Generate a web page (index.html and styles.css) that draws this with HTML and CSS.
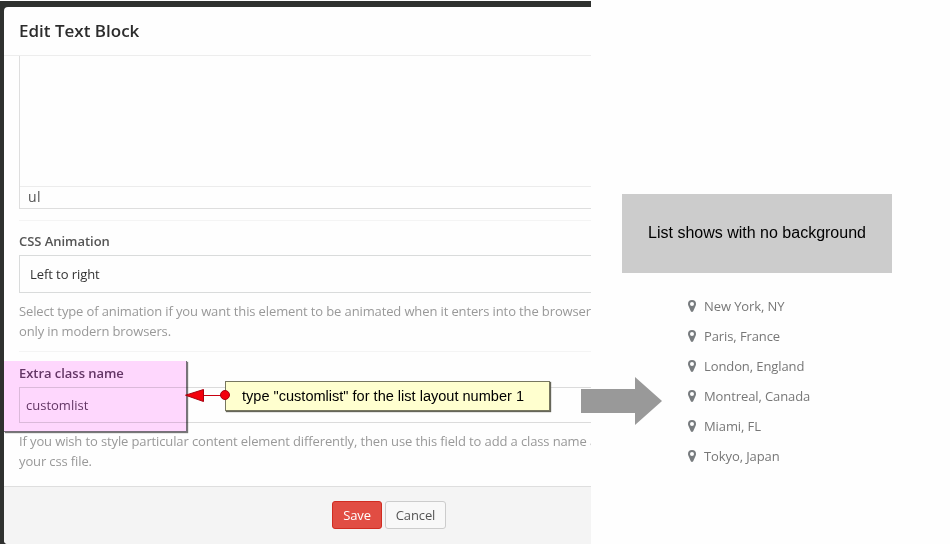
FILE: index.html
```html
<!DOCTYPE html>
<html lang="en">
<head>
<meta charset="utf-8">
<title>Edit Text Block</title>
<link rel="stylesheet" href="styles.css">
</head>
<body>
<main class="page">
  <section class="backdrop">
    <div class="modal">
      <header class="modal-header"><h1>Edit Text Block</h1></header>
      <div class="modal-body">
        <div class="editor">
          <div class="editor-area"></div>
          <div class="editor-path">ul</div>
        </div>
        <div class="field">
          <label class="label">CSS Animation</label>
          <div class="select">Left to right</div>
          <p class="help">Select type of animation if you want this element to be animated when it enters into the browser<br>only in modern browsers.</p>
        </div>
        <div class="field field-class">
          <label class="label">Extra class name</label>
          <div class="input">customlist</div>
          <p class="help">If you wish to style particular content element differently, then use this field to add a class name a<br>your css file.</p>
        </div>
      </div>
      <footer class="modal-footer">
        <button class="btn btn-save">Save</button>
        <button class="btn btn-cancel">Cancel</button>
      </footer>
    </div>
  </section>
  <aside class="result">
    <div class="banner">List shows with no background</div>
    <ul class="places">
      <li><svg class="pin" viewBox="0 0 8 12"><path fill-rule="evenodd" d="M4 0a4 4 0 0 1 4 4c0 .7-.1 1.200-.4 1.700L5.200 11.300Q4 12.600 2.800 11.300L.4 5.700Q0 4.900 0 4a4 4 0 0 1 4-4zm0 2a2 2 0 1 0 0 4 2 2 0 0 0 0-4z"/></svg><span>New York, NY</span></li>
      <li><svg class="pin" viewBox="0 0 8 12"><path fill-rule="evenodd" d="M4 0a4 4 0 0 1 4 4c0 .7-.1 1.200-.4 1.700L5.200 11.300Q4 12.600 2.800 11.300L.4 5.700Q0 4.900 0 4a4 4 0 0 1 4-4zm0 2a2 2 0 1 0 0 4 2 2 0 0 0 0-4z"/></svg><span>Paris, France</span></li>
      <li><svg class="pin" viewBox="0 0 8 12"><path fill-rule="evenodd" d="M4 0a4 4 0 0 1 4 4c0 .7-.1 1.200-.4 1.700L5.200 11.300Q4 12.600 2.800 11.300L.4 5.700Q0 4.900 0 4a4 4 0 0 1 4-4zm0 2a2 2 0 1 0 0 4 2 2 0 0 0 0-4z"/></svg><span>London, England</span></li>
      <li><svg class="pin" viewBox="0 0 8 12"><path fill-rule="evenodd" d="M4 0a4 4 0 0 1 4 4c0 .7-.1 1.200-.4 1.700L5.200 11.300Q4 12.600 2.800 11.300L.4 5.700Q0 4.900 0 4a4 4 0 0 1 4-4zm0 2a2 2 0 1 0 0 4 2 2 0 0 0 0-4z"/></svg><span>Montreal, Canada</span></li>
      <li><svg class="pin" viewBox="0 0 8 12"><path fill-rule="evenodd" d="M4 0a4 4 0 0 1 4 4c0 .7-.1 1.200-.4 1.700L5.200 11.300Q4 12.600 2.800 11.300L.4 5.700Q0 4.900 0 4a4 4 0 0 1 4-4zm0 2a2 2 0 1 0 0 4 2 2 0 0 0 0-4z"/></svg><span>Miami, FL</span></li>
      <li><svg class="pin" viewBox="0 0 8 12"><path fill-rule="evenodd" d="M4 0a4 4 0 0 1 4 4c0 .7-.1 1.200-.4 1.700L5.200 11.300Q4 12.600 2.800 11.300L.4 5.700Q0 4.900 0 4a4 4 0 0 1 4-4zm0 2a2 2 0 1 0 0 4 2 2 0 0 0 0-4z"/></svg><span>Tokyo, Japan</span></li>
    </ul>
  </aside>
  <div class="highlight"></div>
  <div class="callout">type "customlist" for the list layout number 1</div>
  <svg class="pointer" viewBox="0 0 46 14"><path d="M18 7.500H40" stroke="#c80010"/><path d="M.5 7.200 18.500 1.500v12z" fill="#f3000c" stroke="#a80010"/><circle cx="40" cy="7" r="4.500" fill="#f3000c" stroke="#a80010"/></svg>
  <svg class="big-arrow" viewBox="0 0 81 48"><path d="M0 12h54V0l27 24-27 24V36H0z" fill="#999"/></svg>
</main>
</body>
</html>
```
FILE: styles.css
```css
* { box-sizing: border-box; }
body { margin: 0; background: #fefefe; font: 13px/20px "Open Sans", sans-serif; }
h1, p, ul { margin: 0; padding: 0; }

.page { position: relative; display: flex; width: 950px; height: 544px; overflow: hidden; }

.backdrop { width: 591px; height: 543px; margin-top: 1px; padding: 6px 0 0 4px; background: #2f312f; overflow: hidden; }
.modal { display: flex; flex-direction: column; height: 537px; background: #fefefe; border-radius: 4px 0 0 4px; overflow: hidden; }
.modal-header { height: 49px; flex: none; padding: 12px 15px; border-bottom: 1px solid #ededed; }
h1 { font-size: 17px; line-height: 24px; font-weight: 600; color: #2c2c2c; }
.modal-body { height: 430px; flex: none; padding-left: 15px; white-space: nowrap; overflow: hidden; }

.editor { height: 153px; border: solid #dedede; border-width: 0 0 1px 1px; }
.editor-area { height: 130px; }
.editor-path { height: 22px; padding-left: 8px; border-top: 1px solid #ececec; font-size: 14px; line-height: 20px; letter-spacing: .3px; color: #555; }

.field { margin-top: 11px; padding-top: 10px; border-top: 1px solid #f4f4f4; height: 120px; }
.field-class { margin-top: 11px; padding-top: 11px; }
.label { display: block; font-weight: 600; letter-spacing: -.04px; color: #555; }
.select { height: 38px; margin-top: 4px; padding-left: 10px; border: solid #d9dbdb; border-width: 1px 0 1px 1px; line-height: 36px; letter-spacing: -.07px; color: #333; }
.input { height: 36px; margin-top: 4px; padding-left: 6px; border: solid #dbdbdb; border-width: 1px 0 1px 1px; line-height: 34px; color: #333; }
.field-class .label, .field-class .input { color: #644066; }
.help { margin-top: 8px; letter-spacing: -.125px; color: #999; }

.modal-footer { display: flex; align-items: flex-start; gap: 3px; flex: 1; padding: 14px 0 0 328px; background: #f4f4f4; border-top: 1px solid #dedede; }
.btn { height: 28px; padding: 0; border: 1px solid; border-radius: 3px; font: 13px/26px "Open Sans", sans-serif; letter-spacing: -.1px; }
.btn-save { width: 50px; color: #fff; background: #e14d43; border-color: #d02c21; }
.btn-cancel { width: 61px; color: #555; background: #f8f8f8; border-color: #ccc; }

.result { padding: 194px 0 0 31px; }
.banner { width: 270px; height: 79px; background: #ccc; text-align: center; font: 16px/77px "Liberation Sans", sans-serif; color: #000; }
.places { list-style: none; padding: 18px 0 0 66px; letter-spacing: -.1px; color: #777; }
.places li { display: flex; align-items: center; gap: 8px; height: 30px; }
.pin { width: 8px; height: 12px; fill: #777b7e; }

.highlight { position: absolute; left: 4px; top: 361px; width: 183px; height: 71px; background: #ffd8fe; mix-blend-mode: multiply; border: solid #77707a; border-width: 0 1px 1px 0; box-shadow: 1px 1px 1px #777; }
.callout { position: absolute; left: 225px; top: 381px; width: 325px; height: 30px; padding-left: 16px; background: #ffffcf; border: 1px solid #77775f; box-shadow: 1px 1px 1px #66665a; font: 14.550px/28px "Liberation Sans", sans-serif; white-space: nowrap; color: #000; }
.pointer { position: absolute; left: 185px; top: 388px; width: 46px; height: 14px; }
.big-arrow { position: absolute; left: 581px; top: 377px; width: 81px; height: 48px; }
```
